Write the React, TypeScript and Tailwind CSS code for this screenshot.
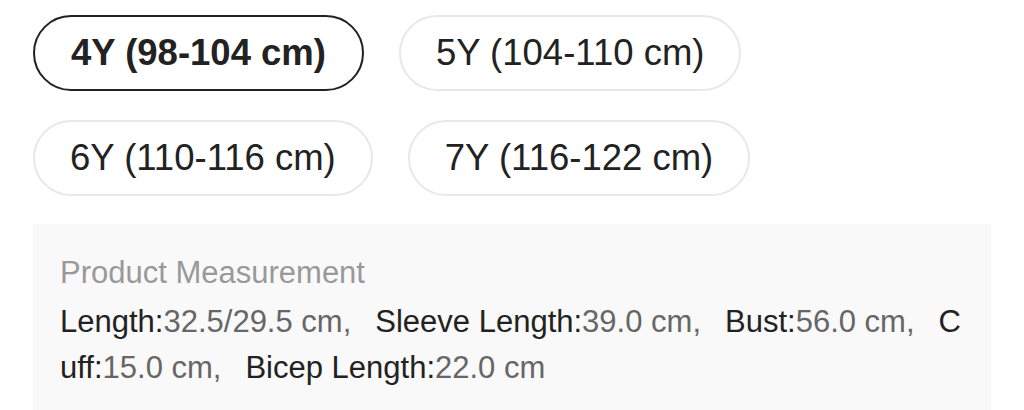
export default function App() {
  const sizes = [
    { label: "4Y (98-104 cm)", active: true },
    { label: "5Y (104-110 cm)", active: false },
    { label: "6Y (110-116 cm)", active: false },
    { label: "7Y (116-122 cm)", active: false },
  ];
  const items = [
    { k: "Length:", v: "32.5/29.5 cm," },
    { k: "Sleeve Length:", v: "39.0 cm," },
    { k: "Bust:", v: "56.0 cm," },
    { k: "Cuff:", v: "15.0 cm," },
    { k: "Bicep Length:", v: "22.0 cm" },
  ];
  return (
    <div
      className="w-[1024px] h-[410px] bg-white overflow-hidden px-[33px] pt-[15px]"
      style={{ fontFamily: '"Liberation Sans", Arial, sans-serif' }}
    >
      <div className="flex flex-wrap gap-x-[35px] gap-y-[29px]">
        {sizes.map((s) => (
          <div
            key={s.label}
            className={
              s.active
                ? "h-[76px] px-[36px] rounded-full border-2 border-[#222222] flex items-center text-[36.5px] font-bold text-[#222222]"
                : "h-[76px] px-[35px] rounded-full border-2 border-[#e8e8e8] flex items-center text-[36.5px] text-[#222222]"
            }
          >
            {s.label}
          </div>
        ))}
      </div>
      <div className="mt-[28px] bg-[#f9f9f9] px-[27px] pt-[31px] h-[200px]">
        <div className="text-[31px] leading-[36px] text-[#999999]">Product Measurement</div>
        <p className="mt-[8px] text-[31px] leading-[46px] text-[#222222] break-all">
          {items.map((it) => (
            <span key={it.k} className="mr-[24px]">
              {it.k}
              <span className="text-[#666666]">{it.v}</span>
            </span>
          ))}
        </p>
      </div>
    </div>
  );
}
